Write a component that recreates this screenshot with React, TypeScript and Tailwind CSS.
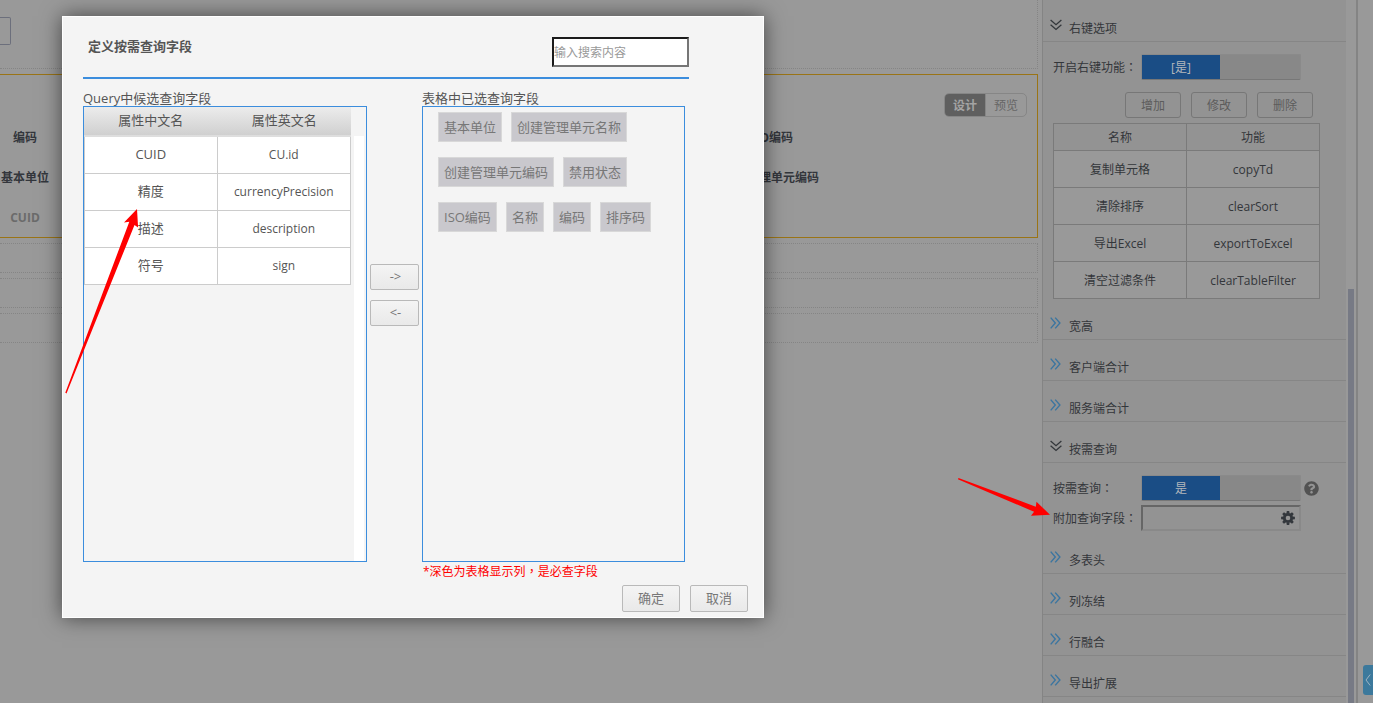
import React from "react";
import { FaQuestionCircle } from "react-icons/fa";

const candidates = [
  ["CUID", "CU.id"],
  ["精度", "currencyPrecision"],
  ["描述", "description"],
  ["符号", "sign"],
];

const selected = [
  ["基本单位", "创建管理单元名称"],
  ["创建管理单元编码", "禁用状态"],
  ["ISO编码", "名称", "编码", "排序码"],
];

const menuItems = [
  ["复制单元格", "copyTd"],
  ["清除排序", "clearSort"],
  ["导出Excel", "exportToExcel"],
  ["清空过滤条件", "clearTableFilter"],
];

// Full-width punctuation centred in its cell.
function Punct({ children }: { children: string }) {
  return <span className="font-['Noto_Sans_CJK_TC',sans-serif] leading-none">{children}</span>;
}

function DoubleChevron({ open }: { open?: boolean }) {
  return open ? (
    <svg className="size-3 shrink-0 text-[#33373b]" viewBox="0 0 12 12" fill="none" stroke="currentColor" strokeWidth="1.3">
      <path d="M.6 1 6 5.7 11.4 1M.6 5.8 6 10.5l5.4-4.7" />
    </svg>
  ) : (
    <svg className="size-3 shrink-0 text-[#3b75a0]" viewBox="0 0 12 12" fill="none" stroke="currentColor" strokeWidth="1.4">
      <path d="M.7.6 5.3 6 .7 11.4M5.2.6 9.9 6l-4.7 5.4" />
    </svg>
  );
}

function Gear() {
  const teeth = [0, 45, 90, 135, 180, 225, 270, 315];
  return (
    <svg className="size-3.5" viewBox="0 0 14 14" fill="none">
      <circle cx="7" cy="7" r="3.7" stroke="#33373c" strokeWidth="2.8" />
      {teeth.map((a) => (
        <path key={a} d="M5.4 2.6 5.8.1h2.4l.4 2.5z" fill="#33373c" transform={`rotate(${a} 7 7)`} />
      ))}
    </svg>
  );
}

function SectionHeader({ title, open }: { title: string; open?: boolean }) {
  return (
    <button
      type="button"
      aria-expanded={!!open}
      className="flex h-[41px] w-full items-start gap-[7px] border-b border-[#868686] pt-[18px] pl-[7px] text-left"
    >
      <DoubleChevron open={open} />
      <span className="leading-5">{title}</span>
    </button>
  );
}

function Toggle({ label, text }: { label: string; text: string }) {
  return (
    <button
      type="button"
      role="switch"
      aria-checked="true"
      aria-label={label}
      className="flex h-[26px] w-40 rounded-xs border border-[#8a8a8a] border-b-[#777] bg-[#888]"
    >
      <span className="flex h-full w-[78px] items-center justify-center bg-[#1a4d85] pt-0.5 text-[#b4b8bc]">{text}</span>
    </button>
  );
}

function SmallButton({ children }: { children: React.ReactNode }) {
  return (
    <button type="button" className="h-[26px] w-14 rounded-[3px] border border-[#777] pt-0.5 text-[#5c5c5c]">
      {children}
    </button>
  );
}

function DialogButton({ children, className }: { children: React.ReactNode; className: string }) {
  return (
    <button
      type="button"
      className={`rounded-xs border border-[#b9b9b9] bg-linear-to-b from-[#f4f4f4] to-[#e9e9e9] text-[13px] text-[#777] ${className}`}
    >
      {children}
    </button>
  );
}

function DesignCanvas() {
  return (
    <main className="flex min-w-0 flex-1 flex-col gap-[5px] pr-1">
      <div className="flex h-[69px] items-start border-r border-b border-dotted border-[#858585] pt-[17px]">
        <div className="h-7 w-[11px] rounded-r-xs border border-l-0 border-[#6c6f7c]" />
      </div>
      <section className="h-[164px] border border-l-0 border-[#9a7416]">
        <div className="flex justify-end pt-[18px] pr-2.5 pb-px">
          <div className="flex h-6 overflow-hidden rounded-[5px] border border-[#868686]">
            <button type="button" className="w-10 bg-[#5f5f5f] pt-0.5 font-bold text-[#a4a4a4]">设计</button>
            <button type="button" className="w-[41px] border-l border-[#868686] pt-0.5 text-[#666]">预览</button>
          </div>
        </div>
        <div className="flex justify-between pr-[218px] text-center leading-10 font-bold whitespace-nowrap text-[#33363c]">
          <div className="w-[50px]">
            <div>编码</div>
            <div>基本单位</div>
            <div className="text-[#6b6b6b]">CUID</div>
          </div>
          <div>
            <div>ISO编码</div>
            <div>创建管理单元编码</div>
          </div>
        </div>
      </section>
      <div className="h-[30px] border border-l-0 border-dotted border-[#858585]" />
      <div className="h-[30px] border border-l-0 border-dotted border-[#858585]" />
      <div className="h-[30px] border border-l-0 border-dotted border-[#858585]" />
    </main>
  );
}

function PropertyPanel() {
  return (
    <aside className="flex w-[316px] shrink-0 border-x border-[#848484] border-r-2">
      <div className="min-w-0 flex-1 bg-[#939393] pt-px">
        <SectionHeader title="右键选项" open />
        <div className="px-2.5 pt-3">
          <div className="flex items-center">
            <span className="w-[88px] pt-0.5 whitespace-nowrap">
              开启右键功能<Punct>：</Punct>
            </span>
            <Toggle label="开启右键功能" text="[是]" />
          </div>
          <div className="flex justify-end gap-2.5 pt-3 pr-[23px] pb-[5px]">
            <SmallButton>增加</SmallButton>
            <SmallButton>修改</SmallButton>
            <SmallButton>删除</SmallButton>
          </div>
          <table className="w-[267px] table-fixed border-separate border-spacing-0 border-t border-l border-[#7a7a7a] text-center">
            <thead>
              <tr className="h-[27px]">
                <th className="border-r border-b border-[#7a7a7a] p-0 pt-0.5 font-normal">名称</th>
                <th className="border-r border-b border-[#7a7a7a] p-0 pt-0.5 font-normal">功能</th>
              </tr>
            </thead>
            <tbody>
              {menuItems.map(([name, fn]) => (
                <tr key={fn} className="h-[37px] bg-[#999]">
                  <td className="border-r border-b border-[#7a7a7a] p-0 pt-0.5">{name}</td>
                  <td className="border-r border-b border-[#7a7a7a] p-0 pt-0.5">{fn}</td>
                </tr>
              ))}
            </tbody>
          </table>
        </div>
        <SectionHeader title="宽高" />
        <SectionHeader title="客户端合计" />
        <SectionHeader title="服务端合计" />
        <SectionHeader title="按需查询" open />
        <div className="flex flex-col gap-1 px-2.5 pt-3 pb-0.5">
          <div className="flex items-center">
            <span className="w-[88px] pt-0.5 whitespace-nowrap">
              按需查询<Punct>：</Punct>
            </span>
            <Toggle label="按需查询" text="是" />
            <FaQuestionCircle className="ml-[3px] size-[15px] text-[#525252]" />
          </div>
          <div className="flex items-center">
            <label htmlFor="extra-fields" className="w-[88px] pt-0.5 whitespace-nowrap">
              附加查询字段<Punct>：</Punct>
            </label>
            <div className="flex h-[26px] w-40 items-center border-2 border-t-[#666] border-r-[#898989] border-b-[#898989] border-l-[#666] pr-1">
              <input id="extra-fields" className="h-full min-w-0 flex-1 bg-transparent px-1 outline-none" />
              <button type="button" aria-label="设置">
                <Gear />
              </button>
            </div>
          </div>
        </div>
        <SectionHeader title="多表头" />
        <SectionHeader title="列冻结" />
        <SectionHeader title="行融合" />
        <SectionHeader title="导出扩展" />
      </div>
      <div className="w-2.5 shrink-0 px-0.5 pt-[289px]">
        <div className="h-full w-1.5 bg-[#777a85]" />
      </div>
    </aside>
  );
}

function FieldDialog() {
  return (
    <div
      role="dialog"
      aria-label="定义按需查询字段"
      className="absolute top-4 left-[62px] w-[702px] border border-white bg-[#f4f4f4] px-5 pt-5 pb-[5px] text-[13px] text-[#555] shadow-[0_0_20px_rgba(0,0,0,0.55)]"
    >
      <header className="flex w-[606px] items-start justify-between border-b-2 border-[#3b8ddd] pb-2.5">
        <h2 className="pl-[5px] leading-[18px] font-bold">定义按需查询字段</h2>
        <input
          aria-label="输入搜索内容"
          placeholder="输入搜索内容"
          className="h-[30px] w-[137px] border-2 border-t-[#1b1b1b] border-r-[#767676] border-b-[#767676] border-l-[#1b1b1b] bg-white text-xs outline-none placeholder:text-[#999]"
        />
      </header>
      <div className="flex pt-[9px]">
        <section className="w-[284px]">
          <h3 className="h-[18px] leading-5">Query中候选查询字段</h3>
          <div className="flex h-[456px] justify-between border border-[#3b8ddd] pr-0.5">
            <table className="w-[267px] table-fixed border-separate border-spacing-0 self-start text-center">
              <thead>
                <tr className="h-[30px] bg-linear-to-b from-[#ececec] to-[#cecece]">
                  <th className="border-b-2 border-[#dedede] p-0 font-normal">属性中文名</th>
                  <th className="border-b-2 border-[#dedede] p-0 font-normal">属性英文名</th>
                </tr>
              </thead>
              <tbody>
                {candidates.map(([cn, en]) => (
                  <tr key={en} className="h-[37px] bg-white">
                    <td className="border-x border-b border-[#ccc] p-0">{cn}</td>
                    <td className="border-r border-b border-[#ccc] p-0 text-xs">{en}</td>
                  </tr>
                ))}
              </tbody>
            </table>
            <div className="mt-[29px] w-2.5 bg-white" />
          </div>
        </section>
        <div className="flex w-[55px] flex-col items-center gap-2.5 pt-44">
          <DialogButton className="h-[26px] w-[49px] pl-0.5">{"->"}</DialogButton>
          <DialogButton className="h-[26px] w-[49px] pl-0.5">{"<-"}</DialogButton>
        </div>
        <section className="w-[263px]">
          <h3 className="h-[18px] leading-5">表格中已选查询字段</h3>
          <div className="flex h-[456px] flex-col gap-[15px] border border-[#3b8ddd] pt-[5px] pl-[15px]">
            {selected.map((row) => (
              <ul key={row[0]} className="flex gap-[9px]">
                {row.map((name) => (
                  <li
                    key={name}
                    className="flex h-[30px] items-center border border-[#d8d8d8] bg-[#c9c8cd] px-[5px] pt-px whitespace-nowrap text-[#777]"
                  >
                    {name}
                  </li>
                ))}
              </ul>
            ))}
          </div>
          <p className="h-5 pl-px text-xs leading-5 text-[#f00]">
            *深色为表格显示列<Punct>，</Punct>是必查字段
          </p>
        </section>
      </div>
      <footer className="-mr-[5px] flex justify-end gap-2.5 pt-[3px]">
        <DialogButton className="h-[27px] w-[58px]">确定</DialogButton>
        <DialogButton className="h-[27px] w-[58px]">取消</DialogButton>
      </footer>
    </div>
  );
}

export default function App() {
  return (
    <div className="relative flex h-screen overflow-hidden bg-[#999] font-['Open_Sans','Noto_Sans_CJK_SC',sans-serif] text-xs text-[#33363a]">
      <DesignCanvas />
      <PropertyPanel />
      <div className="w-[15px] shrink-0" />
      <button
        type="button"
        aria-label="展开"
        className="absolute right-0 bottom-2 flex h-[30px] w-2.5 items-center justify-center rounded-l-[3px] bg-[#3c799c]"
      >
        <svg className="h-3 w-1.5" viewBox="0 0 6 12" fill="none" stroke="#9fb4c2">
          <path d="M5.2.5 1 6l4.2 5.5" />
        </svg>
      </button>
      <FieldDialog />
      <svg className="pointer-events-none absolute top-[209px] left-[65px] h-[185px] w-[74px]" viewBox="65 209 74 185" fill="#f00">
        <path d="M137 209 124 222.5l5.3-.8L65.3 392.8l1.2.7L134.5 225l3.6 2.5z" />
      </svg>
      <svg className="pointer-events-none absolute top-[477px] left-[957px] h-10 w-[93px]" viewBox="957 477 93 40" fill="#f00">
        <path d="M1050 514.8 1036.5 501.7l-.7 5L958.5 478l-.6 1.2 76.2 32.6-3.1 4z" />
      </svg>
    </div>
  );
}
